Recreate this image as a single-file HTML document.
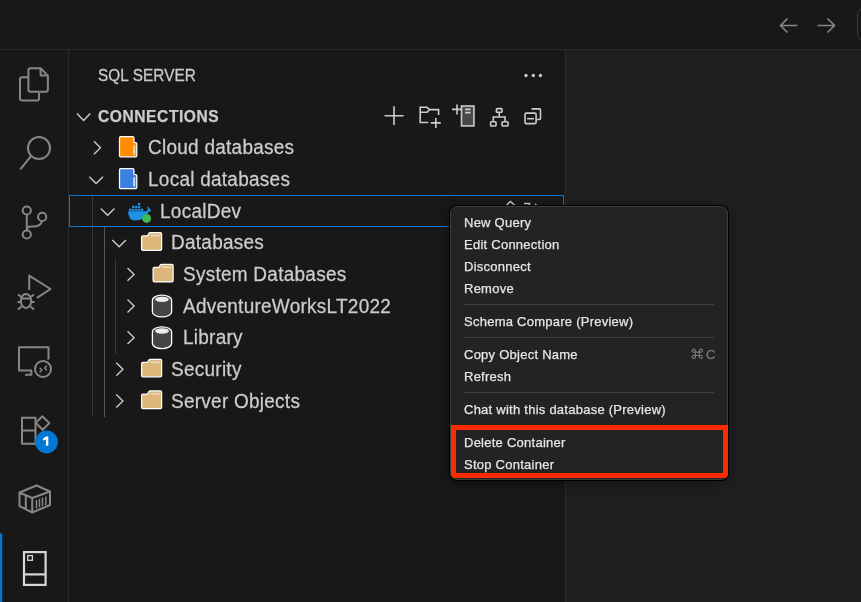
<!DOCTYPE html>
<html><head><meta charset="utf-8">
<style>
*{margin:0;padding:0;box-sizing:border-box}
html,body{width:861px;height:602px;overflow:hidden;background:#181818;font-family:"Liberation Sans",sans-serif;position:relative}
.a{position:absolute}
.t{position:absolute;white-space:nowrap;line-height:1;color:#cccccc;will-change:transform;-webkit-text-stroke:0.25px currentColor}
.tree{font-size:19px;letter-spacing:0.25px;transform:scaleY(1.03);transform-origin:0 16px}
.menu .t{font-size:13px;color:#e6e6e6;letter-spacing:0.25px}
svg{position:absolute;overflow:visible}
</style></head><body>
<!-- title bar -->
<div class="a" style="left:0;top:0;width:861px;height:49px;background:#181818"></div>
<div class="a" style="left:0;top:49px;width:861px;height:1px;background:#2b2b2b"></div>
<svg style="left:0;top:0" width="861" height="50">
 <g fill="none" stroke="#868686" stroke-width="1.6">
  <path d="M797.5 25.5H781M787.5 18.5L780.5 25.5L787.5 32.5"/>
  <path d="M817.5 25.5H834M827.5 18.5L834.5 25.5L827.5 32.5"/>
 </g>
 <rect x="857.5" y="9.5" width="30" height="30" rx="5" fill="none" stroke="#3a3a3a"/>
</svg>
<!-- activity bar -->
<div class="a" style="left:68px;top:50px;width:1px;height:552px;background:#2b2b2b"></div>
<!-- editor -->
<div class="a" style="left:566px;top:50px;width:295px;height:552px;background:#1f1f1f"></div>
<div class="a" style="left:565px;top:50px;width:1px;height:552px;background:#2b2b2b"></div>

<svg style="left:0;top:0" width="69" height="602">
 <g fill="none" stroke="#868686" stroke-width="2" stroke-linejoin="round">
  <!-- explorer -->
  <path d="M28.4 77.2H22a2 2 0 0 0-2 2V98.5a2 2 0 0 0 2 2H37a2 2 0 0 0 2-2V92.8"/>
  <path d="M30.4 68.3H40.6L47.9 75.6V89.8a2 2 0 0 1-2 2H30.4a2 2 0 0 1-2-2V70.3a2 2 0 0 1 2-2Z"/>
  <path d="M40.6 68.3V75.6H47.9"/>
  <!-- search -->
  <circle cx="39" cy="148.1" r="11"/>
  <path d="M31.2 155.9L20.2 169.3"/>
  <!-- scm -->
  <circle cx="26.8" cy="210.5" r="4.1"/>
  <circle cx="42.2" cy="216.9" r="4.1"/>
  <circle cx="26.8" cy="234.5" r="4.1"/>
  <path d="M26.8 214.6V230.4M42 221C41 226 37 226.5 33 226.5H31C28.5 226.5 26.8 228 26.8 230"/>
  <!-- run & debug -->
  <path d="M29.2 290V275.6L50.5 289L37 297.8"/>
  <ellipse cx="26" cy="301" rx="5.2" ry="7"/>
  <path d="M21 298.4H31M18 294.5L21.5 297M34 294.5L30.5 297M17.5 302H21M31 302H34.5M18 309.5L21.5 306.5M34 309.5L30.5 306.5"/>
  <!-- remote explorer -->
  <path d="M32 370.5H19V347.2H48.5V359.5"/>
  <path d="M31.4 370.5V374.7H25"/>
  <circle cx="43" cy="369" r="8"/>
  <path d="M39.6 367.7L42 369.9L39.6 372.2M47 365.6L44.6 367.9L47 370.2" stroke-width="1.4"/>
  <!-- extensions -->
  <path d="M22 417.7H35.5V443.7H22ZM22 430.6H35.5"/>
  <path d="M36 422.6L42.4 416.2L49.3 423.1L42.6 429.8L36.2 423.3"/>
  <!-- containers -->
  <path d="M19.5 492.5L36.5 485.5L50 491.5L32.2 498ZM19.5 492.5V506L32.2 512.5L50 505V491.5M32.2 498V512.5M25.8 495V509"/>
  <path d="M36.5 500V508.5M39.5 498.8V507.3M42.5 497.6V506.1M45.8 496.4V504.9" stroke-width="1.5"/>
 </g>
 <!-- badge -->
 <circle cx="46.5" cy="442" r="11.4" fill="#0078d4"/>
 <path d="M45.9 436.6H48.3V445.8H45.9V439.4L43.1 440.6V438.4Z" fill="#fff"/>
 <!-- active bar -->
 <rect x="0" y="533.5" width="2.2" height="69" fill="#0078d4"/>
 <!-- sql icon -->
 <g fill="none" stroke="#d7d7d7" stroke-width="2.2">
  <rect x="24" y="552.1" width="21.6" height="32.8"/>
  <path d="M24 574.4H45.6"/>
  <rect x="27.7" y="555.6" width="4.7" height="4.7" stroke-width="1.3"/>
 </g>
</svg>

<!-- sidebar header -->
<div class="t" style="left:98px;top:67.5px;font-size:15.3px;letter-spacing:0.1px;color:#cccccc;transform:scaleY(1.12);transform-origin:0 14px">SQL SERVER</div>
<svg style="left:0;top:0" width="566" height="140">
 <g fill="#cccccc">
  <circle cx="526" cy="75.5" r="1.65"/><circle cx="533.3" cy="75.5" r="1.65"/><circle cx="540.4" cy="75.5" r="1.65"/>
 </g>
 <path d="M77 113.6L83.6 120.4L90.2 113.6" fill="none" stroke="#cccccc" stroke-width="1.5"/>
</svg>
<div class="t" style="left:98px;top:109px;font-size:15.6px;font-weight:700;letter-spacing:0.55px;color:#cccccc">CONNECTIONS</div>

<!-- header actions -->
<svg style="left:0;top:0" width="566" height="140">
 <g fill="none" stroke="#cccccc" stroke-width="1.6">
  <path d="M394 106.2V125M384.5 115.7H403.6"/>
  <path d="M428.2 122.5H420.2V107.2H427L429.5 109.6H438.6V115"/>
  <path d="M420.2 112.3H427L429.5 109.8"/>
  <path d="M430.8 122.9H440.8M435.8 117.9V127.9"/>
  <path d="M452 109.4H462M457 104.4V114.4"/>
  <rect x="461.5" y="106" width="12.4" height="19.9" fill="#484848"/>
  <path d="M465 109.4H470.5M465 112.6H470.5"/>
  <rect x="496.4" y="108.6" width="5.6" height="3.6" rx="0.8"/>
  <rect x="490.6" y="121.8" width="5.4" height="4.2" rx="0.8"/>
  <rect x="502.1" y="121.8" width="5.9" height="4.2" rx="0.8"/>
  <path d="M499.2 112.2V117H493.3V121.8M499.2 117H505V121.8"/>
  <path d="M531.5 108.9H539.3a1.2 1.2 0 0 1 1.2 1.2V118.3a1.2 1.2 0 0 1-1.2 1.2H537"/>
  <rect x="525" y="113.1" width="11.1" height="10.5" rx="1.4"/>
  <path d="M527.1 118.7H534"/>
 </g>
</svg>

<!-- tree -->
<div id="tree">
 <!-- indent guides -->
 <div class="a" style="left:92px;top:196px;width:1px;height:221px;background:#383838"></div>
 <div class="a" style="left:104px;top:227px;width:1px;height:190px;background:#585858"></div>
 <div class="a" style="left:115px;top:259px;width:1px;height:95px;background:#3a3a3a"></div>

 <!-- focus border -->
 <div class="a" style="left:69px;top:195px;width:495px;height:32px;border:1px solid #0078d4"></div>

 <svg style="left:0;top:0" width="566" height="602">
  <g fill="none" stroke="#cccccc" stroke-width="1.35">
   <!-- chevrons -->
   <path d="M93.90 141.30L100.50 147.80L93.90 154.20"/>
   <path d="M89.30 176.75L96.15 183.55L103.00 176.75"/>
   <path d="M100.80 208.40L107.65 215.20L114.50 208.40"/>
   <path d="M112.30 240.05L119.15 246.85L126.00 240.05"/>
   <path d="M127.50 267.90L134.10 274.40L127.50 280.80"/>
   <path d="M127.50 299.55L134.10 306.05L127.50 312.45"/>
   <path d="M127.50 331.20L134.10 337.70L127.50 344.10"/>
   <path d="M116.30 362.85L122.90 369.35L116.30 375.75"/>
   <path d="M116.30 394.50L122.90 401.00L116.30 407.40"/>
  </g>
  <!-- file icons -->
  <path d="M120.6 136.7H132.8Q133.9 136.7 133.9 137.8V141.6Q133.9 142.7 135 142.7H135.7Q136.8 142.7 136.8 143.8V155.7Q136.8 156.8 135.7 156.8H120.6Q119.5 156.8 119.5 155.7V137.8Q119.5 136.7 120.6 136.7Z" fill="#ff8c00" stroke="#ffffff" stroke-width="1.25"/>
  <path d="M134.2 145.3V154.6" stroke="#f6dcc0" stroke-width="1.8"/>
  <path d="M120.6 168.6H132.8Q133.9 168.6 133.9 169.7V173.5Q133.9 174.6 135 174.6H135.7Q136.8 174.6 136.8 175.7V187.6Q136.8 188.7 135.7 188.7H120.6Q119.5 188.7 119.5 187.6V169.7Q119.5 168.6 120.6 168.6Z" fill="#3b7fe0" stroke="#ffffff" stroke-width="1.25"/>
  <path d="M134.2 177.2V186.5" stroke="#d0e0f8" stroke-width="1.8"/>
  <!-- docker -->
  <g fill="#1d91e6">
   <path d="M128 211.2H146.2L148 209.5C147.3 208.2 147.2 207 148 206.6C149 207.2 149.6 208.3 149.7 209.6C150.5 209.6 151 210.2 151.2 210.7C150.2 211.4 149.4 211.6 148.5 211.7C146.5 217.5 141.5 220.4 135 220.4C131 220.4 128.8 218.2 128 211.2Z"/>
   <rect x="129.1" y="208.7" width="2.3" height="2.2"/><rect x="132.1" y="208.7" width="2.3" height="2.2"/><rect x="135.1" y="208.7" width="2.3" height="2.2"/><rect x="138" y="208.7" width="2.3" height="2.2"/><rect x="141" y="208.7" width="2.3" height="2.2"/>
   <rect x="132.1" y="205.8" width="2.3" height="2.2"/><rect x="135.1" y="205.8" width="2.3" height="2.2"/><rect x="138" y="205.8" width="2.3" height="2.2"/>
   <rect x="138" y="202.9" width="2.3" height="2.2"/>
  </g>
  <circle cx="146.6" cy="218.4" r="4.5" fill="#3fb94f"/>
  <!-- folders -->
  <path d="M141.60 237.05Q141.60 235.75 142.90 235.75H147.60L148.90 233.25Q149.30 232.65 150.10 232.65H160.30Q161.60 232.65 161.60 233.95V248.95Q161.60 250.25 160.30 250.25H142.90Q141.60 250.25 141.60 248.95Z" fill="#dcb67a" stroke="#ffffff" stroke-width="1.25"/>
  <rect x="150.60" y="234.95" width="9" height="1.3" fill="#efe3cf"/>
  <path d="M153.10 268.70Q153.10 267.40 154.40 267.40H159.10L160.40 264.90Q160.80 264.30 161.60 264.30H171.80Q173.10 264.30 173.10 265.60V280.60Q173.10 281.90 171.80 281.90H154.40Q153.10 281.90 153.10 280.60Z" fill="#dcb67a" stroke="#ffffff" stroke-width="1.25"/>
  <rect x="162.10" y="266.60" width="9" height="1.3" fill="#efe3cf"/>
  <path d="M141.60 363.65Q141.60 362.35 142.90 362.35H147.60L148.90 359.85Q149.30 359.25 150.10 359.25H160.30Q161.60 359.25 161.60 360.55V375.55Q161.60 376.85 160.30 376.85H142.90Q141.60 376.85 141.60 375.55Z" fill="#dcb67a" stroke="#ffffff" stroke-width="1.25"/>
  <rect x="150.60" y="361.55" width="9" height="1.3" fill="#efe3cf"/>
  <path d="M141.60 395.30Q141.60 394.00 142.90 394.00H147.60L148.90 391.50Q149.30 390.90 150.10 390.90H160.30Q161.60 390.90 161.60 392.20V407.20Q161.60 408.50 160.30 408.50H142.90Q141.60 408.50 141.60 407.20Z" fill="#dcb67a" stroke="#ffffff" stroke-width="1.25"/>
  <rect x="150.60" y="393.20" width="9" height="1.3" fill="#efe3cf"/>
  <!-- db cylinders -->
  <path d="M152.40 300.15A9.60 5 0 0 1 171.60 300.15V311.95A9.60 5 0 0 1 152.40 311.95Z" fill="#454545" stroke="#ffffff" stroke-width="1.3"/>
  <ellipse cx="162.00" cy="299.35" rx="6.9" ry="2.7" fill="#ececec"/>
  <path d="M152.40 331.80A9.60 5 0 0 1 171.60 331.80V343.60A9.60 5 0 0 1 152.40 343.60Z" fill="#454545" stroke="#ffffff" stroke-width="1.3"/>
  <ellipse cx="162.00" cy="331.00" rx="6.9" ry="2.7" fill="#ececec"/>
  <!-- inline actions (partially hidden) -->
  <g fill="none" stroke="#cccccc" stroke-width="1.5">
   <path d="M506.5 205L510.5 201.5L514.5 205"/>
   <path d="M524 203.5H529.5V206"/>
   <path d="M535 204L537.5 206"/>
  </g>
 </svg>

 <div class="t tree" style="left:148px;top:138.3px">Cloud databases</div>
 <div class="t tree" style="left:148px;top:169.95px">Local databases</div>
 <div class="t tree" style="left:159.5px;top:201.6px">LocalDev</div>
 <div class="t tree" style="left:171px;top:233.25px">Databases</div>
 <div class="t tree" style="left:182.5px;top:264.9px">System Databases</div>
 <div class="t tree" style="left:182.5px;top:296.55px">AdventureWorksLT2022</div>
 <div class="t tree" style="left:182.5px;top:328.2px">Library</div>
 <div class="t tree" style="left:171px;top:359.85px">Security</div>
 <div class="t tree" style="left:171px;top:391.5px">Server Objects</div>
</div>

<!-- context menu -->
<div class="menu">
 <div class="a" style="left:450px;top:206px;width:278px;height:274px;border-radius:8px;box-shadow:0 3px 14px rgba(0,0,0,0.4)"></div>
 <div class="a" style="left:450px;top:206px;width:278px;height:273.8px;border-radius:7px;background:#232323;border:1px solid #3c3c3c;box-shadow:0 0 0 1px #000"></div>
 <div class="t" style="left:464px;top:215.6px">New Query</div>
 <div class="t" style="left:464px;top:237.6px">Edit Connection</div>
 <div class="t" style="left:464px;top:259.6px">Disconnect</div>
 <div class="t" style="left:464px;top:281.6px">Remove</div>
 <div class="a" style="left:464px;top:304px;width:250px;height:1px;background:#3f3f3f"></div>
 <div class="t" style="left:464px;top:314.6px">Schema Compare (Preview)</div>
 <div class="a" style="left:464px;top:337px;width:250px;height:1px;background:#3f3f3f"></div>
 <div class="t" style="left:464px;top:347.6px">Copy Object Name</div>
 <svg style="left:692px;top:349.3px" width="11" height="10"><path d="M3.2 9V1.6A1.6 1.6 0 1 0 1.6 3.2H8.9A1.6 1.6 0 1 0 7.3 1.6V8.2A1.6 1.6 0 1 0 8.9 6.6H1.6A1.6 1.6 0 1 0 3.2 8.2Z" fill="none" stroke="#7a7a7a" stroke-width="1.15" transform="translate(0.2 0.1) scale(0.98 0.96)"/></svg>
 <div class="t" style="left:706px;top:347.6px;color:#7a7a7a;letter-spacing:0">C</div>
 <div class="t" style="left:464px;top:369.6px">Refresh</div>
 <div class="a" style="left:464px;top:392px;width:250px;height:1px;background:#3f3f3f"></div>
 <div class="t" style="left:464px;top:402.6px">Chat with this database (Preview)</div>
 <div class="t" style="left:464px;top:435.6px">Delete Container</div>
 <div class="t" style="left:464px;top:457.6px">Stop Container</div>
 <!-- red highlight -->
 <div class="a" style="left:451px;top:425px;width:277px;height:53px;border:5px solid #ff2a00;border-radius:0 0 4px 4px"></div>
</div>
</body></html>
